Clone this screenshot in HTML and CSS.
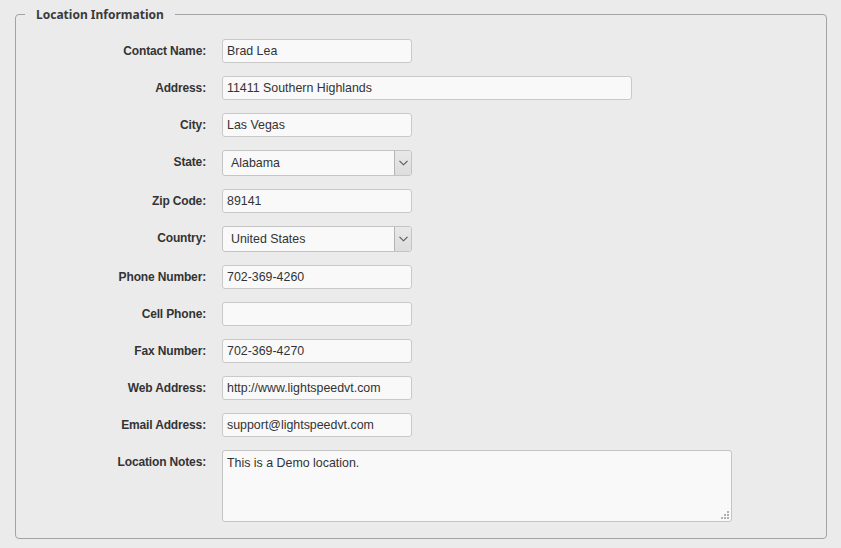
FILE: index.html
```html
<!DOCTYPE html>
<html>
<head>
<meta charset="utf-8">
<link rel="stylesheet" href="styles.css">
</head>
<body>
<fieldset class="panel">
  <legend class="panel-title">Location Information</legend>
  <div class="form-grid">
    <label class="lbl">Contact Name:</label>
    <div class="fld"><input class="txt" type="text" value="Brad Lea"></div>

    <label class="lbl">Address:</label>
    <div class="fld"><input class="txt wide" type="text" value="11411 Southern Highlands"></div>

    <label class="lbl">City:</label>
    <div class="fld"><input class="txt" type="text" value="Las Vegas"></div>

    <label class="lbl">State:</label>
    <div class="fld"><div class="sel"><span class="sel-val">Alabama</span><span class="sel-btn"><svg width="9" height="6" viewBox="0 0 9 6"><path d="M0.5 0.8 L4.5 4.8 L8.5 0.8" fill="none" stroke="#555" stroke-width="1.1"/></svg></span></div></div>

    <label class="lbl">Zip Code:</label>
    <div class="fld"><input class="txt" type="text" value="89141"></div>

    <label class="lbl">Country:</label>
    <div class="fld"><div class="sel"><span class="sel-val">United States</span><span class="sel-btn"><svg width="9" height="6" viewBox="0 0 9 6"><path d="M0.5 0.8 L4.5 4.8 L8.5 0.8" fill="none" stroke="#555" stroke-width="1.1"/></svg></span></div></div>

    <label class="lbl">Phone Number:</label>
    <div class="fld"><input class="txt" type="text" value="702-369-4260"></div>

    <label class="lbl">Cell Phone:</label>
    <div class="fld"><input class="txt" type="text" value=""></div>

    <label class="lbl">Fax Number:</label>
    <div class="fld"><input class="txt" type="text" value="702-369-4270"></div>

    <label class="lbl">Web Address:</label>
    <div class="fld"><input class="txt" type="text" value="http://www.lightspeedvt.com"></div>

    <label class="lbl">Email Address:</label>
    <div class="fld"><input class="txt" type="text" value="support@lightspeedvt.com"></div>

    <label class="lbl">Location Notes:</label>
    <div class="fld"><div class="ta-wrap"><textarea class="ta">This is a Demo location.</textarea><svg class="grip" width="8" height="8" viewBox="0 0 8 8"><g fill="#b0b0b0"><rect x="6" y="0" width="2" height="2"/><rect x="3" y="3" width="2" height="2"/><rect x="6" y="3" width="2" height="2"/><rect x="0" y="6" width="2" height="2"/><rect x="3" y="6" width="2" height="2"/><rect x="6" y="6" width="2" height="2"/></g></svg></div></div>
  </div>
</fieldset>
</body>
</html>
```

FILE: styles.css
```css
html, body {
  margin: 0;
  padding: 0;
  background: #ebebeb;
}
body {
  font-family: "Liberation Sans", Arial, sans-serif;
  font-size: 12px;
  color: #333;
}
.panel {
  margin: 6px 14px 0 15px;
  padding: 16px 0 16px 0;
  border: 1px solid #a3a3a3;
  border-radius: 4px;
  min-width: 0;
}
.panel-title {
  margin-left: 9px;
  padding: 1px 11px 0;
  font-family: "Noto Sans", "Open Sans", sans-serif;
  font-weight: 700;
  font-size: 12px;
  line-height: 16px;
  color: #3a3a3a;
}
.form-grid {
  display: grid;
  grid-template-columns: 190px 1fr;
  column-gap: 16px;
  row-gap: 13px;
}
.lbl {
  justify-self: end;
  align-self: start;
  font-weight: 700;
  line-height: 24px;
  letter-spacing: -0.15px;
  color: #333;
}
.fld {
  display: flex;
}
.txt {
  box-sizing: border-box;
  width: 190px;
  height: 24px;
  margin: 0;
  padding: 0 4px;
  border: 1px solid #c9c9c9;
  border-radius: 3px;
  background: #f9f9f9;
  font-family: "Liberation Sans", Arial, sans-serif;
  font-size: 12.4px;
  color: #333;
  outline: none;
}
.txt.wide {
  width: 410px;
}
.sel {
  box-sizing: border-box;
  position: relative;
  width: 190px;
  height: 26px;
  border: 1px solid #c4c4c4;
  border-radius: 3px;
  background: #f9f9f9;
  display: flex;
  align-items: center;
  font-size: 12.4px;
}
.sel-val {
  padding-left: 8px;
  flex: 1;
  line-height: 24px;
}
.sel-btn {
  box-sizing: border-box;
  width: 17px;
  height: 24px;
  border-left: 1px solid #b5b5b5;
  background: linear-gradient(#e8e8e8, #dddddd);
  border-radius: 0 2px 2px 0;
  display: flex;
  align-items: center;
  justify-content: center;
}
.ta-wrap {
  position: relative;
  width: 510px;
  height: 72px;
}
.ta {
  box-sizing: border-box;
  display: block;
  width: 510px;
  height: 72px;
  margin: 0;
  padding: 4px 4px;
  border: 1px solid #c4c4c4;
  border-radius: 3px;
  background: #f9f9f9;
  font-family: "Liberation Sans", Arial, sans-serif;
  font-size: 12.4px;
  line-height: 16px;
  color: #333;
  resize: none;
  outline: none;
}
.grip {
  position: absolute;
  right: 3px;
  bottom: 3px;
}
```
